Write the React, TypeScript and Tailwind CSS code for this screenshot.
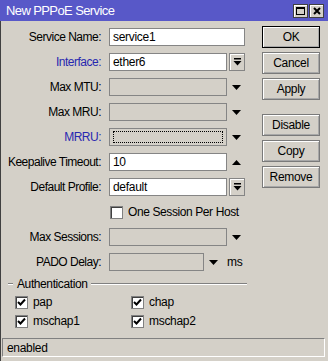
import React from "react"

const font = { fontFamily: '"Liberation Sans", Arial, sans-serif' }

function DownTri() {
  return (
    <svg width="9" height="5" viewBox="0 0 9 5">
      <path d="M0 0H9L4.5 5Z" fill="#000" />
    </svg>
  )
}

function UpTri() {
  return (
    <svg width="9" height="5" viewBox="0 0 9 5">
      <path d="M0 5H9L4.5 0Z" fill="#000" />
    </svg>
  )
}

function Label({ text, blue }: { text: string; blue?: boolean }) {
  return (
    <div className={`w-[100px] shrink-0 text-right text-[12px] tracking-[-0.5px] leading-[18px] ${blue ? "text-[#2828b0]" : "text-black"}`}>
      {text}
    </div>
  )
}

function Input({ value, disabled, focus, width }: { value?: string; disabled?: boolean; focus?: boolean; width: string }) {
  return (
    <div
      className={`${width} h-[18px] border border-[#858585] flex items-center px-[3px] text-[12px] tracking-[-0.3px] ${disabled ? "bg-[#d4d0c8]" : "bg-white"}`}
    >
      {focus ? <div className="w-full h-[12px] border border-dotted border-black" /> : value}
    </div>
  )
}

function DropBtn() {
  return (
    <div className="ml-[2px] w-[16px] h-[18px] border border-[#858585] bg-[#d4d0c8] shadow-[inset_1px_1px_0_#fff] flex items-center justify-center">
      <svg width="9" height="8" viewBox="0 0 9 8">
        <rect x="1" y="0" width="7" height="1.5" fill="#000" />
        <path d="M0.5 3H8.5L4.5 7.5Z" fill="#000" />
      </svg>
    </div>
  )
}

function Slot({ up }: { up?: boolean }) {
  return <div className="w-[18px] h-[18px] flex items-center justify-center">{up ? <UpTri /> : <DownTri />}</div>
}

function Check({ checked }: { checked?: boolean }) {
  return (
    <div className="w-[13px] h-[13px] bg-white border border-[#808080] shadow-[inset_1px_1px_0_#404040] flex items-center justify-center shrink-0">
      {checked && (
        <svg width="9" height="9" viewBox="0 0 9 9">
          <path d="M1 4L3.5 6.5L8 1.5" stroke="#000" strokeWidth="2" fill="none" />
        </svg>
      )}
    </div>
  )
}

function Btn({ text, def }: { text: string; def?: boolean }) {
  return (
    <div
      className={`w-[58px] h-[22px] border ${def ? "border-black" : "border-[#7a7a7a]"} bg-[#d4d0c8] shadow-[inset_1px_1px_0_#fff,inset_-1px_-1px_0_#a8a8a8] flex items-center justify-center text-[12px] tracking-[-0.3px]`}
    >
      {text}
    </div>
  )
}

function AuthItem({ text }: { text: string }) {
  return (
    <div className="flex items-center h-[13px]">
      <Check checked />
      <span className="ml-[5px] text-[12px] leading-[13px] tracking-[-0.3px]">{text}</span>
    </div>
  )
}

export default function App() {
  return (
    <div style={font} className="w-[328px] h-[361px] bg-[#d4d0c8] flex flex-col overflow-hidden text-black">
      {/* Title bar */}
      <div className="h-[21px] shrink-0 bg-[#5858c8] flex items-center pl-[6px] pr-[4px]">
        <span className="text-white text-[13px] tracking-[-0.6px]">New PPPoE Service</span>
        <div className="ml-auto flex gap-[1px]">
          <div className="w-[15px] h-[14px] bg-[#d4d0c8] border border-[#404040] shadow-[inset_1px_1px_0_#fff] flex items-center justify-center">
            <div className="w-[9px] h-[8px] border border-black border-t-2" />
          </div>
          <div className="w-[15px] h-[14px] bg-[#d4d0c8] border border-[#404040] shadow-[inset_1px_1px_0_#fff] flex items-center justify-center">
            <svg width="8" height="8" viewBox="0 0 8 8">
              <path d="M1 1L7 7M7 1L1 7" stroke="#000" strokeWidth="2" />
            </svg>
          </div>
        </div>
      </div>

      <div className="flex-1 border-l border-[#404040] flex flex-col">
        <div className="flex">
          {/* Form */}
          <div className="w-[250px] pt-[7px] flex flex-col gap-[7px]">
            <div className="flex items-center gap-[8px]">
              <Label text="Service Name:" />
              <Input value="service1" width="w-[136px]" />
            </div>
            <div className="flex items-center gap-[8px]">
              <Label text="Interface:" blue />
              <div className="flex">
                <Input value="ether6" width="w-[118px]" />
                <DropBtn />
              </div>
            </div>
            <div className="flex items-center gap-[8px]">
              <Label text="Max MTU:" />
              <div className="flex">
                <Input disabled width="w-[118px]" />
                <Slot />
              </div>
            </div>
            <div className="flex items-center gap-[8px]">
              <Label text="Max MRU:" />
              <div className="flex">
                <Input disabled width="w-[118px]" />
                <Slot />
              </div>
            </div>
            <div className="flex items-center gap-[8px]">
              <Label text="MRRU:" blue />
              <div className="flex">
                <Input disabled focus width="w-[118px]" />
                <Slot />
              </div>
            </div>
            <div className="flex items-center gap-[8px]">
              <Label text="Keepalive Timeout:" />
              <div className="flex">
                <Input value="10" width="w-[118px]" />
                <Slot up />
              </div>
            </div>
            <div className="flex items-center gap-[8px]">
              <Label text="Default Profile:" />
              <div className="flex">
                <Input value="default" width="w-[118px]" />
                <DropBtn />
              </div>
            </div>
            <div className="flex items-center h-[18px] pl-[109px]">
              <Check />
              <span className="ml-[5px] text-[12px] tracking-[-0.4px]">One Session Per Host</span>
            </div>
            <div className="flex items-center gap-[8px]">
              <Label text="Max Sessions:" />
              <div className="flex">
                <Input disabled width="w-[118px]" />
                <Slot />
              </div>
            </div>
            <div className="flex items-center gap-[8px]">
              <Label text="PADO Delay:" />
              <div className="flex items-center">
                <Input disabled width="w-[95px]" />
                <div className="w-[18px] flex justify-center">
                  <DownTri />
                </div>
                <span className="ml-[5px] text-[12px] tracking-[-0.3px]">ms</span>
              </div>
            </div>
          </div>

          {/* Buttons */}
          <div className="ml-[11px] pt-[5px] flex flex-col gap-[4px]">
            <Btn text="OK" def />
            <Btn text="Cancel" />
            <Btn text="Apply" />
            <div className="h-[6px]" />
            <Btn text="Disable" />
            <Btn text="Copy" />
            <Btn text="Remove" />
          </div>
        </div>

        {/* Authentication */}
        <div className="w-[246px] mt-[6px] pl-[7px] h-[14px] flex items-center">
          <div className="w-[5px] h-[2px] border-t border-[#808080] border-b border-b-white" />
          <span className="ml-[4px] text-[12px] tracking-[-0.4px]">Authentication</span>
          <div className="ml-[4px] flex-1 h-[2px] border-t border-[#808080] border-b border-b-white" />
        </div>
        <div className="mt-[5px] grid grid-cols-[116px_1fr] gap-y-[6px] pl-[14px]">
          <AuthItem text="pap" />
          <AuthItem text="chap" />
          <AuthItem text="mschap1" />
          <AuthItem text="mschap2" />
        </div>

        {/* Status bar */}
        <div className="mt-[10px] ml-[1px] w-[323px] h-[19px] shrink-0 border border-t-[#808080] border-l-[#808080] border-b-white border-r-white flex items-center pl-[4px] text-[12px] tracking-[-0.3px]">
          enabled
        </div>
      </div>
    </div>
  )
}
